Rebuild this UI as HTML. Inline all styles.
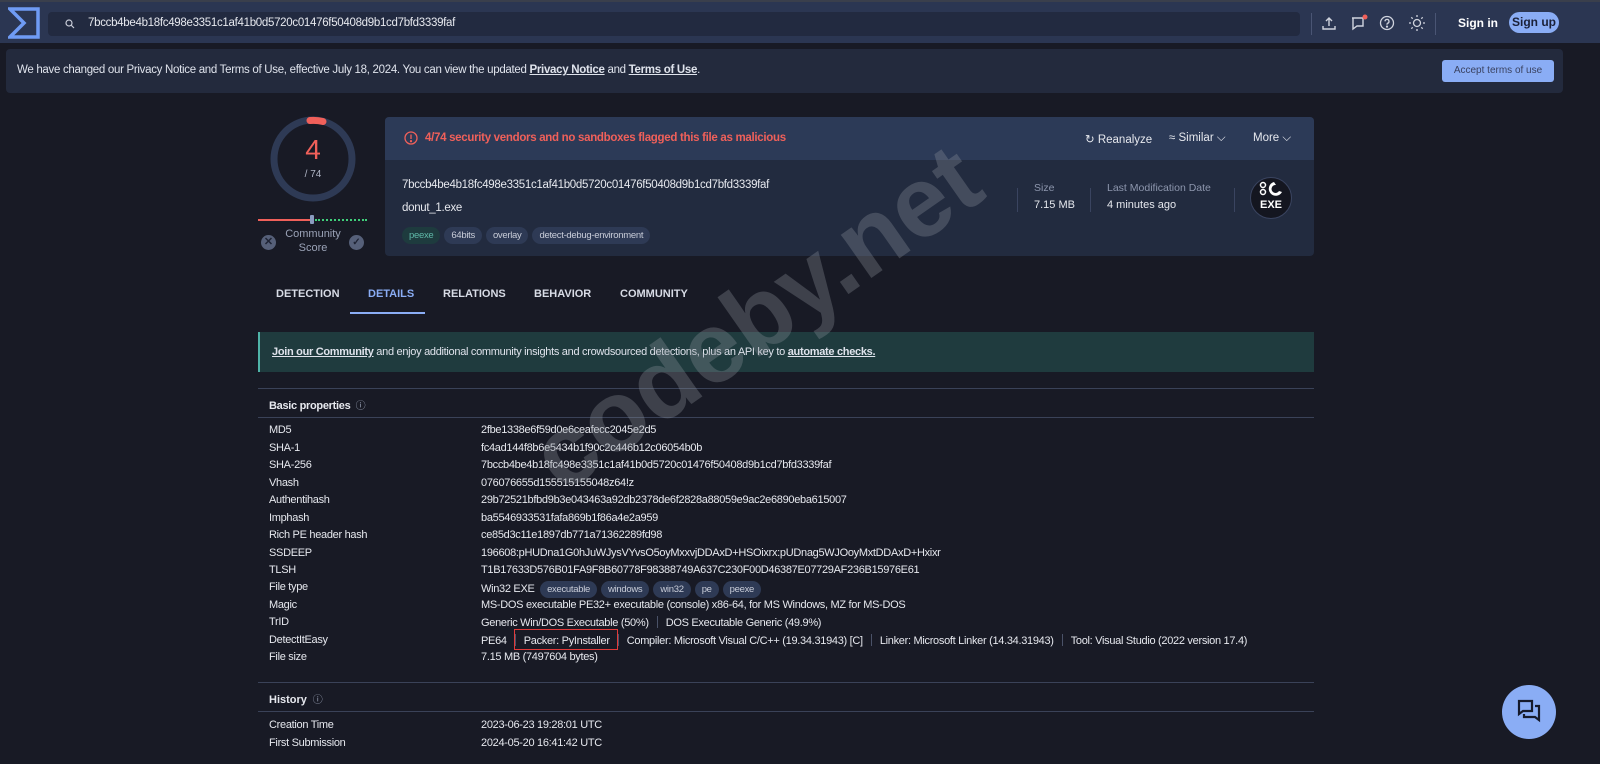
<!DOCTYPE html>
<html><head><meta charset="utf-8"><style>
*{box-sizing:border-box;margin:0;padding:0}
body{width:1600px;height:764px;overflow:hidden;background:#181a25;font-family:"Liberation Sans",sans-serif;color:#e6e8ee;font-size:11px;position:relative}
.a{position:absolute;white-space:nowrap}
.nav{position:absolute;left:0;top:0;width:1600px;height:43px;background:#2b3652;border-top:2px solid #3a3f4c}
.search{position:absolute;left:48px;top:10px;width:1252px;height:24px;background:#222a40;border-radius:4px}
.c{letter-spacing:-0.3px}
.tag{display:inline-block;background:#2e3a55;border-radius:9px;padding:3px 7px;font-size:9.5px;color:#c8ccd8;margin-right:4px;letter-spacing:-0.3px}
.row{position:absolute;left:269px;font-size:11px;letter-spacing:-0.3px;color:#e6e8ee}
.row span{position:absolute;left:212px;white-space:nowrap}
.sep{display:inline-block;width:1px;height:12px;background:#4a5268;margin:0 8px;vertical-align:-2px}
.tab{position:absolute;top:288px;font-size:11px;font-weight:bold;color:#d8dce6}
.hr{position:absolute;left:258px;width:1056px;height:1px;background:#3a4258}
</style></head><body>
<div class="nav">
<svg class="a" style="left:8px;top:5px" width="32" height="32" viewBox="0 0 32 32"><path d="M2 2H30V30H2L16 16Z" fill="none" stroke="#6f9bf4" stroke-width="3.5" stroke-linejoin="miter"/></svg>
<div class="search"><svg class="a" style="left:17px;top:7px" width="10" height="10" viewBox="0 0 10 10"><circle cx="4" cy="4" r="3" fill="none" stroke="#c8ccd8" stroke-width="1.2"/><path d="M6 6L9 9" stroke="#c8ccd8" stroke-width="1.2"/></svg><div class="a c" style="left:40px;top:5px;font-size:11.5px">7bccb4be4b18fc498e3351c1af41b0d5720c01476f50408d9b1cd7bfd3339faf</div></div>
<div class="a" style="left:1311px;top:11px;width:1px;height:22px;background:#4a5574"></div>
<svg class="a" style="left:1321px;top:13px" width="16" height="16" viewBox="0 0 16 16" fill="none" stroke="#d0d4de" stroke-width="1.4"><path d="M8 11V3M5 6l3-3 3 3M2 11v3h12v-3"/></svg>
<svg class="a" style="left:1350px;top:12px" width="18" height="18" viewBox="0 0 18 18" fill="none" stroke="#d0d4de" stroke-width="1.4"><path d="M2 4h11v8H7l-4 3V4"/><circle cx="15" cy="3" r="2.5" fill="#f0605a" stroke="none"/></svg>
<svg class="a" style="left:1379px;top:13px" width="16" height="16" viewBox="0 0 16 16" fill="none" stroke="#d0d4de" stroke-width="1.3"><circle cx="8" cy="8" r="6.5"/><path d="M6 6.3a2 2 0 1 1 2.5 2c-.5.2-.5.6-.5 1.4"/><circle cx="8" cy="11.6" r=".5" fill="#d0d4de"/></svg>
<svg class="a" style="left:1408px;top:12px" width="18" height="18" viewBox="0 0 18 18" fill="none" stroke="#d0d4de" stroke-width="1.3"><circle cx="9" cy="9" r="3.5"/><path d="M9 1v2M9 15v2M1 9h2M15 9h2M3.3 3.3l1.4 1.4M13.3 13.3l1.4 1.4M3.3 14.7l1.4-1.4M13.3 4.7l1.4-1.4"/></svg>
<div class="a" style="left:1435px;top:11px;width:1px;height:22px;background:#4a5574"></div>
<div class="a" style="left:1458px;top:14px;font-size:12px;font-weight:bold;color:#fff">Sign in</div>
<div class="a" style="left:1509px;top:10px;width:50px;height:21px;border-radius:11px;background:#8aadf5;color:#1a2038;font-size:12px;font-weight:bold;text-align:center;line-height:21px">Sign up</div>
</div>
<div class="a" style="left:6px;top:49px;width:1557px;height:44px;background:#232a3d;border-radius:4px"></div>
<div class="a c" style="left:17px;top:64px;font-size:11.5px;color:#dfe3ec">We have changed our Privacy Notice and Terms of Use, effective July 18, 2024. You can view the updated <b style="text-decoration:underline">Privacy Notice</b> and <b style="text-decoration:underline">Terms of Use</b>.</div>
<div class="a" style="left:1442px;top:60px;width:112px;height:22px;background:#8aadf5;border-radius:3px;color:#3a4260;font-size:10px;text-align:center;line-height:22px">Accept terms of use</div>

<svg class="a" style="left:268px;top:114px" width="90" height="90" viewBox="0 0 90 90"><circle cx="45" cy="45" r="39" fill="none" stroke="#2e3a55" stroke-width="7"/><path d="M42 6.5A39 39 0 0 1 55 7.5" fill="none" stroke="#f0605a" stroke-width="7" stroke-linecap="round"/></svg>
<div class="a" style="left:268px;top:134px;width:90px;text-align:center;font-size:28px;color:#f0605a">4</div>
<div class="a" style="left:268px;top:169px;width:90px;text-align:center;font-size:10px;color:#b0b6c6">/ 74</div>
<div class="a" style="left:258px;top:219px;width:54px;height:2px;background:#f0605a"></div>
<div class="a" style="left:315px;top:219px;width:52px;height:0;border-top:2px dotted #3fcf7a"></div>
<div class="a" style="left:310px;top:215px;width:4px;height:9px;background:#8b9cc0;border-radius:1px"></div>
<div class="a" style="left:261px;top:235px;width:15px;height:15px;border-radius:50%;background:#566079;color:#1e2334;font-size:11px;text-align:center;line-height:15px;font-weight:bold">✕</div>
<div class="a" style="left:349px;top:235px;width:15px;height:15px;border-radius:50%;background:#566079;color:#1e2334;font-size:10px;text-align:center;line-height:15px;font-weight:bold">✓</div>
<div class="a" style="left:278px;top:227px;width:70px;text-align:center;font-size:11px;color:#9aa2b6;line-height:14px">Community<br>Score</div>

<div class="a" style="left:385px;top:117px;width:929px;height:139px;background:#222b3f;border-radius:4px;overflow:hidden"><div style="height:43px;background:#2c3a57"></div></div>
<svg class="a" style="left:404px;top:131px" width="14" height="14" viewBox="0 0 14 14" fill="none" stroke="#f0605a" stroke-width="1.3"><circle cx="7" cy="7" r="6"/><path d="M7 3.5v4.5"/><circle cx="7" cy="10.2" r=".5" fill="#f0605a"/></svg>
<div class="a" style="left:425px;top:132px;font-size:11.5px;font-weight:bold;color:#f0605a;letter-spacing:-0.3px">4/74 security vendors and no sandboxes flagged this file as malicious</div>
<div class="a" style="left:1085px;top:132px;font-size:11.5px;color:#e6e8ee">↻ Reanalyze</div>
<div class="a" style="left:1169px;top:132px;font-size:11.5px;color:#e6e8ee">≈ Similar ⌵</div>
<div class="a" style="left:1253px;top:132px;font-size:11.5px;color:#e6e8ee">More ⌵</div>
<div class="a c" style="left:402px;top:179px;font-size:11.5px">7bccb4be4b18fc498e3351c1af41b0d5720c01476f50408d9b1cd7bfd3339faf</div>
<div class="a c" style="left:402px;top:202px;font-size:11.5px">donut_1.exe</div>
<div class="a" style="left:402px;top:227px"><span class="tag" style="background:#1e3b3e;color:#5fb8a8">peexe</span><span class="tag">64bits</span><span class="tag">overlay</span><span class="tag">detect-debug-environment</span></div>
<div class="a" style="left:1017px;top:188px;width:1px;height:24px;background:#3a4460"></div>
<div class="a" style="left:1034px;top:182px;font-size:10.5px;color:#8d96ad">Size</div>
<div class="a" style="left:1034px;top:199px;font-size:11px">7.15 MB</div>
<div class="a" style="left:1090px;top:188px;width:1px;height:24px;background:#3a4460"></div>
<div class="a" style="left:1107px;top:182px;font-size:10.5px;color:#8d96ad">Last Modification Date</div>
<div class="a" style="left:1107px;top:199px;font-size:11px">4 minutes ago</div>
<div class="a" style="left:1234px;top:188px;width:1px;height:24px;background:#3a4460"></div>
<div class="a" style="left:1250px;top:177px;width:42px;height:42px;border-radius:50%;background:#141620;border:1px solid #3a4460"></div>
<svg class="a" style="left:1258px;top:181px" width="26" height="16" viewBox="0 0 26 16"><circle cx="5" cy="4" r="2.5" fill="none" stroke="#fff" stroke-width="1.5"/><circle cx="5" cy="11" r="2.5" fill="none" stroke="#fff" stroke-width="1.5"/><path d="M16 1a7 7 0 1 0 8 10l-3-1a4 4 0 1 1-3-6z" fill="#fff"/></svg>
<div class="a" style="left:1250px;top:199px;width:42px;text-align:center;font-size:11px;font-weight:bold;color:#fff">EXE</div>

<div class="tab" style="left:276px">DETECTION</div>
<div class="tab" style="left:368px;color:#8aadf5">DETAILS</div>
<div class="tab" style="left:443px">RELATIONS</div>
<div class="tab" style="left:534px">BEHAVIOR</div>
<div class="tab" style="left:620px">COMMUNITY</div>
<div class="a" style="left:350px;top:312px;width:75px;height:2px;background:#8aadf5"></div>

<div class="a" style="left:258px;top:332px;width:1056px;height:40px;background:#1f3b3e;border-left:2px solid #4fb3a8"></div>
<div class="a c" style="left:272px;top:346px;font-size:11px;color:#dfe3ec"><b style="text-decoration:underline">Join our Community</b> and enjoy additional community insights and crowdsourced detections, plus an API key to <b style="text-decoration:underline">automate checks.</b></div>

<div class="hr" style="top:388px"></div>
<div class="a" style="left:269px;top:397px;font-size:11px;font-weight:bold;letter-spacing:-0.3px">Basic properties <span style="font-weight:normal;color:#9aa2b6;font-size:10px">&nbsp;ⓘ</span></div>
<div class="hr" style="top:417px"></div>
<div class="row" style="top:424px">MD5<span>2fbe1338e6f59d0e6ceafecc2045e2d5</span></div>
<div class="row" style="top:442px">SHA-1<span>fc4ad144f8b6e5434b1f90c2c446b12c06054b0b</span></div>
<div class="row" style="top:459px">SHA-256<span>7bccb4be4b18fc498e3351c1af41b0d5720c01476f50408d9b1cd7bfd3339faf</span></div>
<div class="row" style="top:477px">Vhash<span>076076655d155515155048z64!z</span></div>
<div class="row" style="top:494px">Authentihash<span>29b72521bfbd9b3e043463a92db2378de6f2828a88059e9ac2e6890eba615007</span></div>
<div class="row" style="top:512px">Imphash<span>ba5546933531fafa869b1f86a4e2a959</span></div>
<div class="row" style="top:529px">Rich PE header hash<span>ce85d3c11e1897db771a71362289fd98</span></div>
<div class="row" style="top:547px">SSDEEP<span>196608:pHUDna1G0hJuWJysVYvsO5oyMxxvjDDAxD+HSOixrx:pUDnag5WJOoyMxtDDAxD+Hxixr</span></div>
<div class="row" style="top:564px">TLSH<span>T1B17633D576B01FA9F8B60778F98388749A637C230F00D46387E07729AF236B15976E61</span></div>
<div class="row" style="top:581px">File type<span>Win32 EXE &nbsp;<i class="tag" style="font-style:normal">executable</i><i class="tag" style="font-style:normal">windows</i><i class="tag" style="font-style:normal">win32</i><i class="tag" style="font-style:normal">pe</i><i class="tag" style="font-style:normal">peexe</i></span></div>
<div class="row" style="top:599px">Magic<span>MS-DOS executable PE32+ executable (console) x86-64, for MS Windows, MZ for MS-DOS</span></div>
<div class="row" style="top:616px">TrID<span>Generic Win/DOS Executable (50%)<i class="sep"></i>DOS Executable Generic (49.9%)</span></div>
<div class="row" style="top:634px">DetectItEasy<span>PE64<i class="sep"></i>Packer: PyInstaller<i class="sep"></i>Compiler: Microsoft Visual C/C++ (19.34.31943) [C]<i class="sep"></i>Linker: Microsoft Linker (14.34.31943)<i class="sep"></i>Tool: Visual Studio (2022 version 17.4)</span></div>
<div class="a" style="left:514px;top:629px;width:104px;height:21px;border:1.5px solid #e03a3a"></div>
<div class="row" style="top:651px">File size<span>7.15 MB (7497604 bytes)</span></div>
<div class="hr" style="top:682px"></div>
<div class="a" style="left:269px;top:691px;font-size:11px;font-weight:bold">History <span style="font-weight:normal;color:#9aa2b6;font-size:10px">&nbsp;ⓘ</span></div>
<div class="hr" style="top:711px"></div>
<div class="row" style="top:719px">Creation Time<span>2023-06-23 19:28:01 UTC</span></div>
<div class="row" style="top:737px">First Submission<span>2024-05-20 16:41:42 UTC</span></div>

<div class="a" style="left:510px;top:420px;font-size:100px;font-weight:bold;color:rgba(140,145,155,0.33);transform:rotate(-35deg);transform-origin:0 0">codeby.net</div>

<div class="a" style="left:1502px;top:685px;width:54px;height:54px;border-radius:50%;background:#8aadf5"></div>
<svg class="a" style="left:1516px;top:698px" width="26" height="26" viewBox="0 0 26 26" fill="none" stroke="#151a2c" stroke-width="2.2"><path d="M3 3h13v10H7l-4 3z"/><path d="M19 8h4v14l-4-3H8v-3"/></svg>
</body></html>
